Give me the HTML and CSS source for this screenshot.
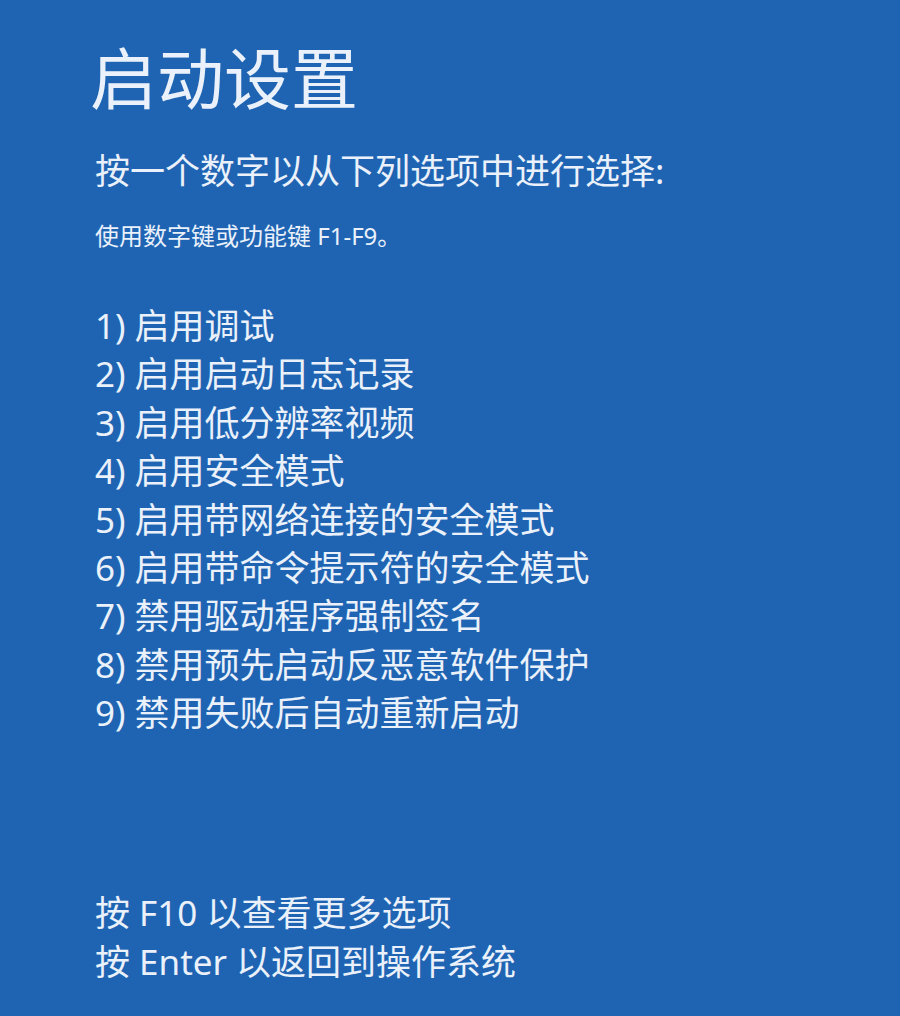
FILE: index.html
```html
<!DOCTYPE html>
<html lang="zh-CN">
<head>
<meta charset="utf-8">
<title>启动设置</title>
<link rel="stylesheet" href="styles.css">
</head>
<body>
<main class="screen">
  <h1 class="title">启动设置</h1>
  <p class="prompt">按一个数字以从下列选项中进行选择:</p>
  <p class="hint">使用数字键或功能键 F1-F9。</p>
  <ol class="options">
    <li>1) 启用调试</li>
    <li>2) 启用启动日志记录</li>
    <li>3) 启用低分辨率视频</li>
    <li>4) 启用安全模式</li>
    <li>5) 启用带网络连接的安全模式</li>
    <li>6) 启用带命令提示符的安全模式</li>
    <li>7) 禁用驱动程序强制签名</li>
    <li>8) 禁用预先启动反恶意软件保护</li>
    <li>9) 禁用失败后自动重新启动</li>
  </ol>
  <div class="footer">
    <p>按 F10 以查看更多选项</p>
    <p>按 Enter 以返回到操作系统</p>
  </div>
</main>
</body>
</html>
```

FILE: styles.css
```css
html, body {
  margin: 0;
  padding: 0;
  background: #1f64b3;
}
body {
  width: 900px;
  height: 1016px;
  overflow: hidden;
  color: #eaf1fa;
  font-family: "Noto Sans", "Noto Sans CJK SC", sans-serif;
  font-weight: 400;
}
.screen {
  display: flex;
  flex-direction: column;
  padding: 0 0 0 95px;
  height: 1016px;
  box-sizing: border-box;
}
.title {
  margin: 31px 0 0 -5px;
  font-size: 67px;
  font-weight: 400;
  line-height: 94px;
}
.prompt {
  margin: 22px 0 0 0;
  font-size: 35px;
  line-height: 48px;
}
.hint {
  margin: 26px 0 0 0;
  font-size: 24px;
  line-height: 30px;
}
.options {
  list-style: none;
  margin: 51px 0 0 0;
  padding: 0;
  font-size: 35px;
  line-height: 48.4px;
}
.options li {
  margin: 0;
}
.footer {
  margin-top: 150px;
  font-size: 35px;
  line-height: 49px;
}
.footer p {
  margin: 0;
}
```
